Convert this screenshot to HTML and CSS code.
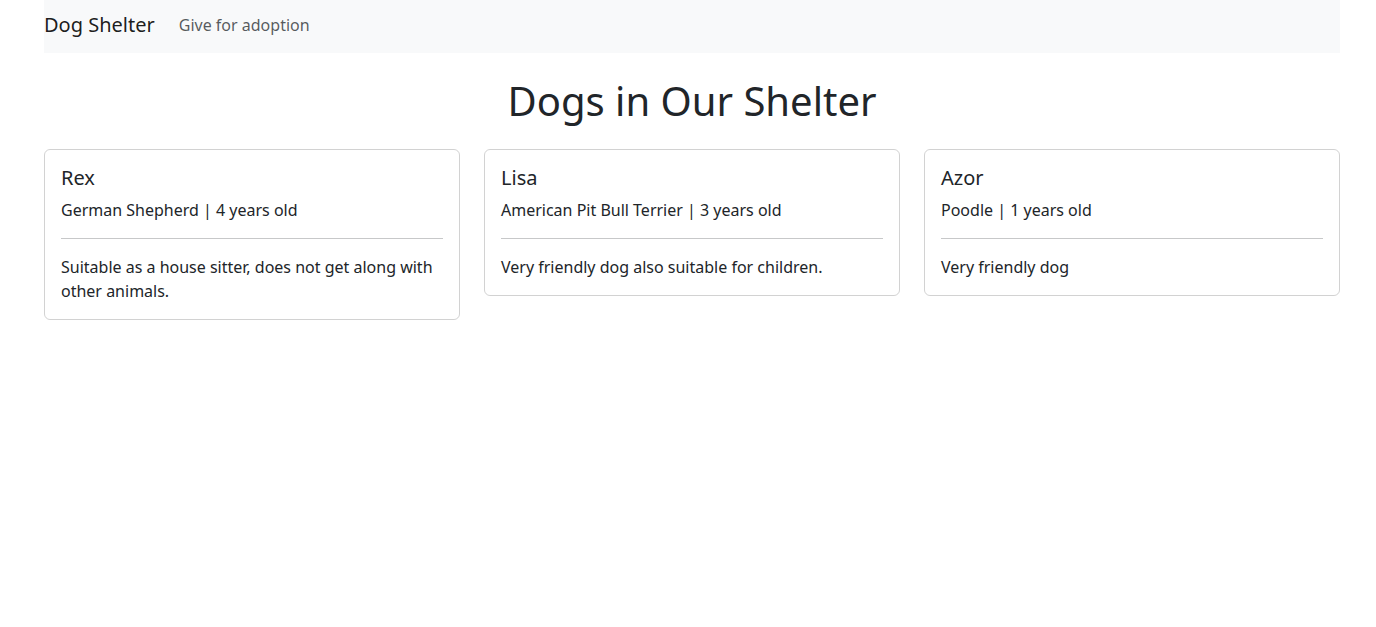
FILE: index.html
```html
<!DOCTYPE html>
<html lang="en">
<head>
<meta charset="utf-8">
<title>Dog Shelter</title>
<link rel="stylesheet" href="styles.css">
</head>
<body>
<div class="container">
  <nav class="navbar">
    <a class="brand" href="#">Dog Shelter</a>
    <a class="nav-link" href="#">Give for adoption</a>
  </nav>
  <h1 class="page-title">Dogs in Our Shelter</h1>
  <div class="cards">
    <div class="card">
      <h5 class="card-title">Rex</h5>
      <p class="card-subtitle">German Shepherd | 4 years old</p>
      <hr class="divider">
      <p class="card-text">Suitable as a house sitter, does not get along with other animals.</p>
    </div>
    <div class="card">
      <h5 class="card-title">Lisa</h5>
      <p class="card-subtitle">American Pit Bull Terrier | 3 years old</p>
      <hr class="divider">
      <p class="card-text">Very friendly dog also suitable for children.</p>
    </div>
    <div class="card">
      <h5 class="card-title">Azor</h5>
      <p class="card-subtitle">Poodle | 1 years old</p>
      <hr class="divider">
      <p class="card-text">Very friendly dog</p>
    </div>
  </div>
</div>
</body>
</html>
```

FILE: styles.css
```css
* { box-sizing: border-box; }
html, body { margin: 0; padding: 0; }
body {
  font-family: "Noto Sans", "Liberation Sans", sans-serif;
  font-size: 16px;
  line-height: 1.5;
  color: #212529;
  background: #fff;
}
.container {
  width: 1296px;
  margin: 0 0 0 44px;
}
.navbar {
  display: flex;
  align-items: center;
  height: 53px;
  background: #f8f9fa;
}
.brand {
  font-size: 20px;
  line-height: 30px;
  color: rgba(0,0,0,.9);
  text-decoration: none;
  margin-right: 16px;
  margin-top: -3px;
}
.nav-link {
  padding: 8px;
  color: rgba(33,37,41,.75);
  text-decoration: none;
  line-height: 24px;
  margin-top: -4px;
}
.page-title {
  font-size: 40px;
  font-weight: 400;
  line-height: 1.2;
  text-align: center;
  margin: 24px 0 24px;
}
.cards {
  display: grid;
  grid-template-columns: repeat(3, 1fr);
  gap: 24px;
  align-items: start;
}
.card {
  border: 1px solid rgba(0,0,0,.175);
  border-radius: 6px;
  padding: 16px;
}
.card-title {
  font-size: 20px;
  font-weight: 400;
  line-height: 1.2;
  margin: 0 0 8px;
}
.card-subtitle {
  margin: 0;
  line-height: 24px;
}
.divider {
  border: 0;
  border-top: 1px solid #212529;
  opacity: .25;
  margin: 16px 0;
}
.card-text {
  margin: 0;
  line-height: 24px;
}
```
